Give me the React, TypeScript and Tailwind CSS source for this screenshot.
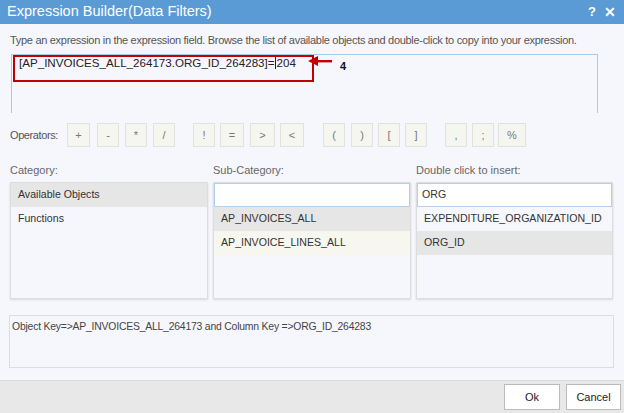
import React from "react";

const ops: { t: string; cls: string }[] = [
  { t: "+", cls: "ml-[13px] w-[23px]" },
  { t: "-", cls: "ml-[7px] w-[22px]" },
  { t: "*", cls: "ml-[6px] w-[22px]" },
  { t: "/", cls: "ml-[6px] w-[22px]" },
  { t: "!", cls: "ml-[18px] w-[22px]" },
  { t: "=", cls: "ml-[5px] w-[24px]" },
  { t: ">", cls: "ml-[6px] w-[25px]" },
  { t: "<", cls: "ml-[5px] w-[24px]" },
  { t: "(", cls: "ml-[19px] w-[22px]" },
  { t: ")", cls: "ml-[6px] w-[22px]" },
  { t: "[", cls: "ml-[5px] w-[22px]" },
  { t: "]", cls: "ml-[5px] w-[22px]" },
  { t: ",", cls: "ml-[18px] w-[22px]" },
  { t: ";", cls: "ml-[5px] w-[22px]" },
  { t: "%", cls: "ml-[4px] w-[28px]" },
];

export default function App() {
  return (
    <div
      className="w-[624px] h-[413px] flex flex-col bg-[#f6f7fd] overflow-hidden"
      style={{ fontFamily: '"Liberation Sans", Arial, sans-serif' }}
    >
      {/* Title bar */}
      <div className="h-[24px] bg-[#5b9bd5] flex items-center justify-between pl-[7px] pr-[8px] shrink-0">
        <span className="text-white text-[14.5px]">Expression Builder(Data Filters)</span>
        <div className="flex items-center gap-[8px] text-white font-bold text-[13px]">
          <span>?</span>
          <span className="text-[14px]">✕</span>
        </div>
      </div>

      <div className="flex flex-col pl-[10px] pr-[11px]">
        {/* Instruction */}
        <div className="mt-[9px] h-[14px] leading-[14px] text-[11px] text-[#555] tracking-[-0.3px] whitespace-nowrap">
          Type an expression in the expression field. Browse the list of available objects and double-click to copy into your expression.
        </div>

        {/* Expression field */}
        <div className="relative mt-[7px] ml-[1px] w-[587px] h-[59px] border-l border-t border-r border-[#a9c9e6]">
          <div className="absolute left-[1px] top-[0px] w-[301px] h-[27px] border-2 border-[#c00000]" />
          <div className="absolute left-[7px] top-[1px] h-[14px] leading-[14px] text-[11.6px] text-[#222] whitespace-nowrap flex items-center">
            <span>[AP_INVOICES_ALL_264173.ORG_ID_264283]=</span>
            <span className="inline-block w-[1px] h-[12px] bg-[#222] mx-[0.5px]" />
            <span>204</span>
          </div>
          <svg className="absolute left-[296px] top-[1px]" width="26" height="12" viewBox="0 0 26 12">
            <polygon points="0,5 10,0 10,10" fill="#c00000" />
            <rect x="9" y="4" width="15" height="2.4" fill="#c00000" />
          </svg>
          <span className="absolute left-[328px] top-[3px] text-[11px] font-bold text-[#111]">4</span>
        </div>

        {/* Operators */}
        <div className="mt-[10px] flex items-center h-[24px]">
          <span className="w-[44px] text-[11px] text-[#555] tracking-[-0.4px]">Operators:</span>
          {ops.map((o) => (
            <div
              key={o.t}
              className={`${o.cls} h-[24px] flex items-center justify-center bg-[#f6f6f0] border border-[#e2e2dc] text-[11px] text-[#777]`}
            >
              {o.t}
            </div>
          ))}
        </div>

        {/* Labels */}
        <div className="mt-[16px] grid grid-cols-[198px_198px_197px] gap-x-[5px] h-[14px] leading-[14px] text-[11px] text-[#666]">
          <span>Category:</span>
          <span>Sub-Category:</span>
          <span>Double click to insert:</span>
        </div>

        {/* Lists */}
        <div className="mt-[5px] grid grid-cols-[198px_198px_197px] gap-x-[5px] h-[117px] text-[10.6px] text-[#333]">
          <div className="border border-[#ddd] shadow-[0_1px_2px_rgba(0,0,0,0.12)] bg-[#f6f7fd] flex flex-col">
            <div className="h-[24px] flex items-center pl-[7px] bg-[#e6e6e6]">Available Objects</div>
            <div className="h-[24px] flex items-center pl-[7px]">Functions</div>
          </div>
          <div className="border border-[#ddd] shadow-[0_1px_2px_rgba(0,0,0,0.12)] bg-[#f6f7fd] flex flex-col">
            <div className="h-[24px] bg-white border border-[#b5d0ea]" />
            <div className="h-[24px] flex items-center pl-[7px] bg-[#e6e6e6]">AP_INVOICES_ALL</div>
            <div className="h-[24px] flex items-center pl-[7px] bg-[#f7f7ef]">AP_INVOICE_LINES_ALL</div>
          </div>
          <div className="border border-[#ddd] shadow-[0_1px_2px_rgba(0,0,0,0.12)] bg-[#f6f7fd] flex flex-col">
            <div className="h-[24px] bg-white border border-[#b5d0ea] flex items-center pl-[4px]">ORG</div>
            <div className="h-[24px] flex items-center pl-[7px]">EXPENDITURE_ORGANIZATION_ID</div>
            <div className="h-[24px] flex items-center pl-[7px] bg-[#e6e6e6]">ORG_ID</div>
          </div>
        </div>

        {/* Info box */}
        <div className="mt-[16px] -ml-[1px] w-[605px] h-[53px] border border-[#ddd] bg-[#f6f7fd] px-[2px] pt-[3px] text-[10.4px] text-[#444] tracking-[-0.2px]">
          Object Key=&gt;AP_INVOICES_ALL_264173 and Column Key =&gt;ORG_ID_264283
        </div>
      </div>

      {/* Footer */}
      <div className="mt-auto h-[33px] shrink-0 bg-[#e8e8e8] border-t border-[#dcdcdc] flex items-center justify-end gap-[6px] pr-[3px]">
        <button className="w-[56px] h-[26px] bg-white border border-[#bbb] text-[11px] text-[#222]">Ok</button>
        <button className="w-[55px] h-[26px] bg-white border border-[#bbb] text-[11px] text-[#222]">Cancel</button>
      </div>
    </div>
  );
}
